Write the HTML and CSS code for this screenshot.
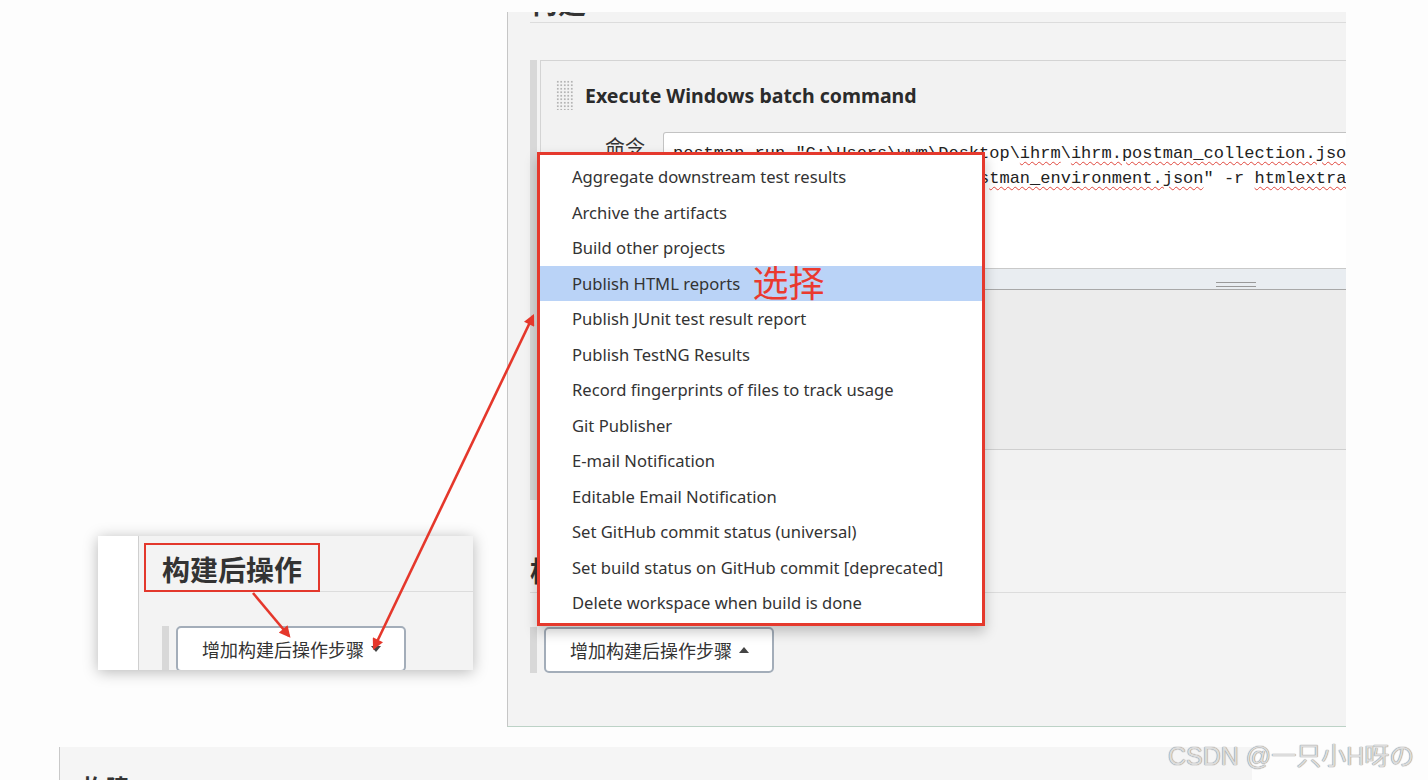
FILE: index.html
```html
<!DOCTYPE html>
<html lang="zh-CN">
  <head>
    <meta charset="UTF-8">
    <meta name="viewport" content="width=device-width, initial-scale=1.0">
    <title>构建后操作</title>
    <link rel="stylesheet" href="styles.css">
  </head>
  <body>
    <!-- main job config window -->
    <div class="shot shot-main">
      <h2 class="section-title cut">构建</h2>
      <div class="step">
        <div class="step-bar"></div>
        <div class="step-box">
          <div class="step-head">
            <span class="grip"></span>
            <span class="step-name">Execute Windows batch command</span>
          </div>
          <div class="field">
            <label class="field-label">命令</label>
            <div class="field-col">
              <div class="cmd-box">
<div class="cmd">postman run ″C:\Users\wwm\Desktop\<span class="spell">ihrm</span>\<span class="spell">ihrm.postman_collection.json</span>″ -e ″C:\
Users\wwm\Desktop\ihrm\ihrm.pos<span class="spell">tman_environment.json</span>″ -r <span class="spell">htmlextra</span></div>
                <div class="resize"><span class="resize-grip"></span></div>
              </div>
              <div class="field-foot"></div>
            </div>
          </div>
        </div>
      </div>
      <h2 class="section-title after">构建后操作</h2>
      <div class="add-row">
        <div class="step-bar"></div>
        <button class="add-btn">增加构建后操作步骤 <span class="caret"></span></button>
      </div>
    </div>

    <!-- small capture of the same section, closed dropdown -->
    <div class="shot shot-mini">
      <div class="gutter"></div>
      <div class="mini-body">
        <h2 class="section-title mini">构建后操作</h2>
        <div class="add-row">
          <div class="step-bar"></div>
          <button class="add-btn">增加构建后操作步骤 <span class="caret down"></span></button>
        </div>
      </div>
    </div>

    <!-- next section, cut at the bottom -->
    <div class="shot shot-next">
      <h2 class="section-title next">构建</h2>
    </div>

    <ul class="menu">
      <li>Aggregate downstream test results</li>
      <li>Archive the artifacts</li>
      <li>Build other projects</li>
      <li class="active">Publish HTML reports <span class="pick">选择</span></li>
      <li>Publish JUnit test result report</li>
      <li>Publish TestNG Results</li>
      <li>Record fingerprints of files to track usage</li>
      <li>Git Publisher</li>
      <li>E-mail Notification</li>
      <li>Editable Email Notification</li>
      <li>Set GitHub commit status (universal)</li>
      <li>Set build status on GitHub commit [deprecated]</li>
      <li>Delete workspace when build is done</li>
    </ul>

    <div class="mark"></div>

    <svg class="arrows" width="1428" height="780" viewBox="0 0 1428 780">
      <defs>
        <marker id="head" viewBox="0 0 10 10" refX="8" refY="5" markerWidth="5" markerHeight="4.4" orient="auto-start-reverse">
          <path d="M0,0 L10,5 L0,10 z" fill="#e5372b"/>
        </marker>
      </defs>
      <line x1="253" y1="593" x2="289" y2="636" stroke="#e5372b" stroke-width="2.6" marker-end="url(#head)"/>
      <line x1="374" y1="648" x2="533" y2="316" stroke="#e5372b" stroke-width="2.6" marker-start="url(#head)" marker-end="url(#head)"/>
    </svg>

    <div class="watermark">CSDN @一只小H呀の</div>
  </body>
</html>
```

FILE: styles.css
```css
* {
  box-sizing: border-box;
}

body {
  margin: 0;
  width: 1428px;
  height: 780px;
  position: relative;
  overflow: hidden;
  background: #fdfdfd;
  font-family: "Noto Sans", "Noto Sans CJK SC", sans-serif;
  color: #333;
}

/* every captured window keeps its own spot on the board */
.shot {
  position: absolute;
  overflow: hidden;
}

.shot-main {
  left: 507px;
  top: 12px;
  width: 839px;
  height: 715px;
  background: #f3f3f3;
  border-left: 1px solid #c6c6c6;
  border-bottom: 1px solid #bcd2c6;
  padding-left: 22px;
}

.section-title {
  margin: 0;
  font-family: "Noto Sans CJK SC", sans-serif;
  font-size: 28px;
  font-weight: 700;
  line-height: 36px;
  color: #333;
  padding-bottom: 4px;
  border-bottom: 1px solid #dcdcdc;
}

.section-title.cut {
  margin-top: -28px;
  padding-bottom: 2px;
}

.section-title.after {
  margin-top: 52px;
}

.section-title.mini {
  margin-top: 15px;
}

/* build step */
.step {
  display: flex;
  gap: 3px;
  margin-top: 37px;
  height: 440px;
}

.step-bar {
  flex: none;
  width: 7px;
  background: #d8d8d8;
}

.step-box {
  flex: 1;
  border-top: 1px solid #d4d4d4;
  border-left: 1px solid #d4d4d4;
  background: #f2f2f2;
}

.step-head {
  display: flex;
  align-items: center;
  gap: 12px;
  padding: 19px 0 0 15px;
  height: 49px;
}

.grip {
  width: 17px;
  height: 30px;
  background-image: radial-gradient(circle, #b4b4b4 0.9px, transparent 1.3px);
  background-size: 3.5px 3.5px;
}

.step-name {
  font-size: 19.5px;
  font-weight: 700;
  color: #2b2b2b;
}

.field {
  display: flex;
  gap: 18px;
  margin-top: 22px;
}

.field-label {
  flex: none;
  width: 104px;
  text-align: right;
  font-family: "Noto Sans CJK SC", sans-serif;
  font-size: 20px;
  line-height: 28px;
  margin-top: 1px;
  color: #333;
}

.field-col {
  flex: none;
  width: 1146px;
}

.cmd-box {
  border: 1px solid #c3c3c3;
  border-bottom: none;
  border-radius: 3px 0 0 0;
  background: #fff;
}

.cmd {
  height: 135px;
  padding: 8px 9px;
  font-family: "Liberation Mono", "DejaVu Sans Mono", monospace;
  font-size: 17px;
  line-height: 25px;
  color: #222;
  white-space: pre;
  overflow: hidden;
}

.spell {
  text-decoration: underline wavy #e0463c;
  text-decoration-thickness: 1px;
  text-underline-offset: 3px;
}

.resize {
  height: 22px;
  display: flex;
  justify-content: center;
  align-items: flex-end;
  padding-bottom: 2px;
  background: #e9edf1;
  border-top: 1px solid #c9c9c9;
  border-bottom: 1px solid #a8a8a8;
}

.resize-grip {
  width: 40px;
  height: 5px;
  border-top: 1px solid #999;
  border-bottom: 1px solid #999;
}

.field-foot {
  height: 160px;
  background: #ececec;
  border-bottom: 1px solid #cfcfcf;
}

/* add post-build step */
.add-row {
  display: flex;
  gap: 7px;
  margin-top: 34px;
  height: 46px;
}

.add-btn {
  display: flex;
  align-items: center;
  gap: 7px;
  width: 230px;
  height: 46px;
  padding: 0 0 0 24px;
  border: 2px solid #a3adb9;
  border-radius: 5px;
  background: #fff;
  font-family: "Noto Sans CJK SC", sans-serif;
  font-size: 18px;
  color: #333;
}

.caret {
  width: 0;
  height: 0;
  border-left: 5px solid transparent;
  border-right: 5px solid transparent;
  border-bottom: 6px solid #444;
}

.caret.down {
  border-bottom: none;
  border-top: 6px solid #444;
}

.shot-mini {
  left: 98px;
  top: 536px;
  width: 375px;
  height: 134px;
  display: flex;
  box-shadow: 0 2px 14px rgba(0, 0, 0, 0.28);
}

.gutter {
  flex: none;
  width: 41px;
  background: #fff;
  border-right: 1px solid #cfcfcf;
}

.mini-body {
  flex: 1;
  background: #f3f3f3;
  padding-left: 23px;
}

.shot-next {
  left: 59px;
  top: 747px;
  width: 1193px;
  height: 40px;
  background: #f5f5f5;
  border-left: 1px solid #c9c9c9;
  padding-left: 22px;
}

.section-title.next {
  margin-top: 22px;
  font-size: 24px;
  border-bottom: none;
}

/* opened dropdown */
.menu {
  position: absolute;
  left: 537px;
  top: 152px;
  width: 448px;
  height: 474px;
  margin: 0;
  padding: 4px 0 2px;
  list-style: none;
  background: #fff;
  border: 3px solid #e5392d;
  box-shadow: 0 6px 12px rgba(0, 0, 0, 0.22);
}

.menu li {
  display: flex;
  align-items: center;
  height: 35.5px;
  padding-left: 32px;
  font-size: 16.6px;
  color: #333;
  white-space: pre;
}

.menu li.active {
  background: #bad3f7;
}

.pick {
  margin-left: 8px;
  margin-top: -5px;
  font-family: "Noto Sans CJK SC", sans-serif;
  font-size: 36px;
  line-height: 36px;
  color: #ea3a2f;
}

.mark {
  position: absolute;
  left: 144px;
  top: 543px;
  width: 176px;
  height: 49px;
  border: 2.5px solid #e3382c;
}

.arrows {
  position: absolute;
  left: 0;
  top: 0;
  pointer-events: none;
}

.watermark {
  position: absolute;
  left: 1168px;
  top: 736px;
  font-family: "Liberation Sans", "Noto Sans CJK SC", sans-serif;
  font-size: 25px;
  color: #dcdcdc;
  text-shadow: 0 0 1px #8a8a8a, 0 0 1px #8a8a8a;
  white-space: nowrap;
}
```
